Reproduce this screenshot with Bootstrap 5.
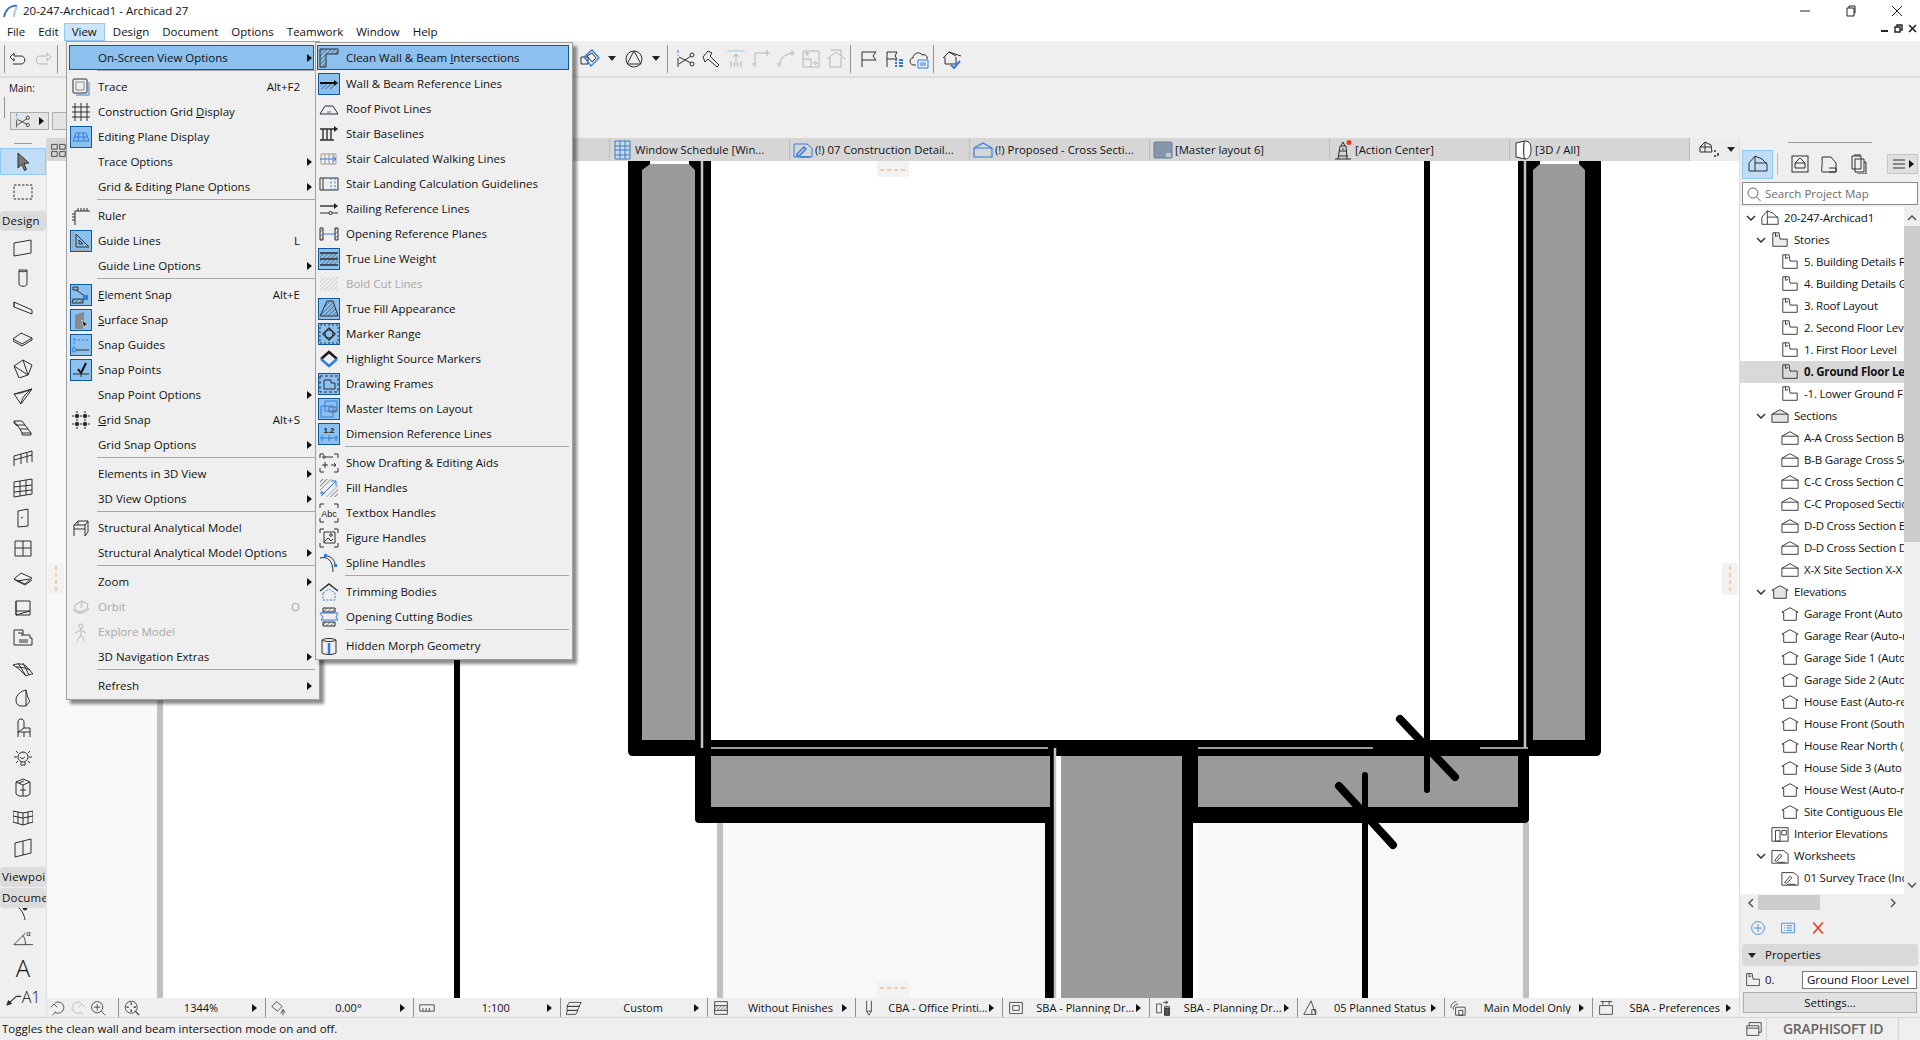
<!DOCTYPE html>
<html lang="en">
<head>
  <meta charset="UTF-8" />
  <title>20-247-Archicad1 - Archicad 27</title>
  <link href="https://cdn.jsdelivr.net/npm/bootstrap@5.3.0/dist/css/bootstrap.min.css" rel="stylesheet"/>
  <style>
    body { margin: 0; width: 1920px; height: 1040px; overflow: hidden; background: #fff; color: #111; font-family: "Open Sans", "Noto Sans", sans-serif; font-size: 11.5px; line-height: 1.2; }
    svg { display: block; flex: none; }
    .ic { width: 20px; height: 20px; fill: none; stroke: #2e2e2e; stroke-width: 1; }
    .ic-s { width: 16px; height: 16px; }
    .ic-g { stroke: #b4b4b4; color: #b4b4b4; }
    .shell { width: 1920px; height: 1040px; }

    .title-bar { height: 22px; padding-left: 3px; font-size: 11.5px; }
    .win-btn { width: 46px; }
    .menu-bar { height: 19px; padding-left: 3px; }
    .menu-top { padding: 0 3px; height: 18px; margin-right: 5px; border: 1px solid transparent; font-size: 11.5px; }
    .menu-top.is-open { background: #cce4f7; border-color: #90c8f6; padding: 0 7px; margin: 0 4px 0 -4px; }
    .doc-btns { margin-left: auto; gap: 5px; padding-right: 3px; margin-top: -6px; }

    .tool-row { height: 37px; background: #efefef; border-bottom: 2px solid #dcdcdc; }
    .tool-left { width: 577px; padding-left: 4px; }
    .tb-slot { width: 25px; height: 25px; }
    .tb-caret { width: 19px; }
    .tb-div { width: 1px; height: 28px; background: #8f8f8f; margin: 0 5px 0 2px; }
    .tool-row2 { height: 60px; background: #efefef; padding: 3px 0 0 4px; }
    .main-lbl { font-size: 10px; margin: 1px 0 3px 5px; }
    .pet-div { width: 1px; height: 21px; background: #8f8f8f; margin: 0 5px 12px 0; }
    .pet-box { width: 39px; height: 18px; background: #e4e4e4; border: 1px solid #adadad; }
    .pet-box2 { width: 14px; border-right: 0; margin-left: 3px; }
    .tri-r { width: 0; height: 0; border-left: 5px solid #111; border-top: 4px solid transparent; border-bottom: 4px solid transparent; }
    .tri-d { width: 0; height: 0; border-top: 5px solid #222; border-left: 4px solid transparent; border-right: 4px solid transparent; }

    .work-area { height: 879px; }
    .tool-box { width: 47px; background: #efefef; border-right: 1px solid #dedede; }
    .grip-h { height: 1px; background: #999; width: 18px; margin: 5px auto 4px; }
    .tool-on { height: 27px; background: #c0ddf5; border: 1px solid #90c8f6; }
    .tool-cell { height: 30px; }
    .tool-marq { margin-top: 2px; }
    .tool-arc { height: 10px; }
    .tool-lbl { height: 20px; background: #dcdcdc; border-radius: 4px; padding-left: 2px; overflow: hidden; white-space: nowrap; margin-bottom: 1px; font-size: 11.5px; letter-spacing: .2px; position: relative; z-index: 1; }
    .tool-lbl.lbl-sec { margin-top: 4px; }
    .tool-lbl.lbl-first { margin-bottom: 2px; }

    .center-col { width: 1692px; }
    .tab-row { height: 23px; background: #d6d6d6; }
    .tab-pad { width: 562px; padding-left: 3px; }
    .doc-tab { width: 180px; border-left: 1px solid #bdbdbd; padding-left: 3px; gap: 2px; white-space: nowrap; font-size: 11.3px; }
    .tab-opts { background: #ececec; border-left: 1px solid #bdbdbd; flex: 1; padding-left: 9px; gap: 8px; }
    .draw { width: 1692px; height: 837px; }

    .nav-row { height: 19px; background: #efefef; }
    .nav-left { width: 71px; padding-left: 3px; gap: 4px; }
    .nav-cell { width: 147.8px; height: 19px; border-left: 1px solid #8f8f8f; padding-left: 5px; padding-right: 8px; white-space: nowrap; }
    .nav-txt { flex: 1; text-align: center; overflow: hidden; font-size: 11px; padding-left: 10px; }

    .side-panel { width: 181px; background: #efefef; border-left: 1px solid #dcdcdc; }
    .pan-tabs { height: 34px; padding-left: 2px; }
    .pan-on { width: 31px; height: 29px; background: #c0ddf5; border: 1px solid #90c8f6; }
    .pan-sep { width: 1px; height: 22px; background: #bbb; margin: 0 5px 0 4px; }
    .pan-btn { width: 31px; height: 20px; background: #e0e0e0; border: 1px solid #c4c4c4; margin-left: auto; margin-right: 2px; gap: 2px; }
    .search-box { height: 23px; width: 176px; margin: 1px 0 2px 2px; background: #fff; border: 1px solid #8a8a8a; padding: 0 0 0 3px; gap: 3px; color: #6b6b6b; }
    .search-ic { stroke: #666; }
    .tree-wrap { height: 687px; }
    .tree-list { width: 164px; overflow: hidden; background: #fff; }
    .tree-row { height: 22px; white-space: nowrap; border: 0; background: transparent; padding: 0; color: #111; font-size: 11.5px; letter-spacing: -.2px; }
    .tree-row.is-sel { background: #d9d9d9; font-weight: 700; }
    .chev { width: 10px; margin-right: 5px; flex: none; }
    .lv0 { padding-left: 6px; }
    .lv1 { padding-left: 16px; }
    .lv1b { padding-left: 31px; }
    .lv2 { padding-left: 41px; }
    .tree-row .ic { width: 18px; height: 18px; margin-right: 5px; }
    .v-scroll { width: 16px; }
    .v-thumb { height: 316px; background: #cdcdcd; margin: 5px 0 340px; }
    .h-scroll { height: 17px; padding-left: 0; width: 164px; }
    .h-thumb { width: 62px; height: 15px; background: #cdcdcd; margin: 0 auto 0 6px; }
    .act-row { height: 33px; padding-left: 10px; gap: 14px; }
    .prop-head { height: 22px; margin: 0 2px; background: #d9d9d9; border-radius: 3px; padding-left: 6px; gap: 9px; }
    .prop-row { height: 19px; margin-top: 4px; padding-left: 5px; }
    .prop-input { width: 115px; height: 18px; min-height: 0; margin-left: auto; margin-right: 3px; border: 1px solid #7a7a7a; background: #fff; border-radius: 0; padding: 0 0 0 4px; font-size: 11.5px; color: #111; line-height: 16px; }
    .btn.set-btn { display: block; height: 21px; width: 174px; margin: 3px 0 0 3px; padding: 0; background: #e1e1e1; border: 1px solid #adadad; border-radius: 0; font-size: 11.5px; color: #111; line-height: 1; }

    .status-bar { height: 23px; background: #efefef; border-top: 1px solid #d4d4d4; padding-left: 2px; }
    .id-box { width: 174px; margin-left: auto; height: 22px; }
    .id-div { width: 1px; height: 22px; background: #d4d4d4; }
    .id-txt { font-size: 14px; color: #666; font-weight: 600; margin: 0 15px 0 16px; letter-spacing: -.3px; white-space: nowrap; }

    .dropdown-menu.fly { position: absolute; display: block; margin: 0; min-width: 0; border: 1px solid #a0a0a0; border-radius: 0; background: #efefef; box-shadow: 4px 4px 3px rgba(0,0,0,.45); font-size: 11.5px; color: #111; }
    .dropdown-menu.fly-a { left: 66px; top: 41px; width: 254px; height: 659px; padding: 3px 0 0 2px; z-index: 10; }
    .dropdown-menu.fly-b { left: 315px; top: 42px; width: 258px; height: 618px; padding: 2px 0 0 1px; z-index: 11; }
    .dropdown-item.m-it { height: 25px; padding: 0; width: 245px; color: #111; font-size: 11.5px; white-space: nowrap; background: none; border: 1px solid transparent; }
    .fly-b .dropdown-item.m-it { width: 252px; }
    .dropdown-item.m-it.is-hi { background: #8cc0ee; border-color: #0f5a9e; }
    .dropdown-item.m-it.is-dis { color: #a8a8a8; }
    .m-ico { width: 22px; height: 22px; margin: 0 6px 0 0; border: 1px solid transparent; flex: none; }
    .m-ico.is-on { background: #8cc0ee; border-color: #0f5a9e; }
    .m-key { margin-left: auto; margin-right: 13px; }
    .m-arr { margin-left: auto; margin-right: 1px; }
    .dropdown-divider.m-sep { border-top: 1px solid #a6a6a6; margin: 0 0 3px 28px; opacity: 1; width: 218px; }
    .fly-b .dropdown-divider.m-sep { margin-left: 28px; width: 224px; }
    .dropdown-item.first-gap { margin-bottom: 1px; }
    .dropdown-divider.m-sep.first-sep { margin-top: 0; margin-bottom: 3px; }
    .ic-txt { fill: #222; stroke: none; font-family: "Liberation Sans", sans-serif; }
  </style>
</head>
<body>

<svg width="0" height="0" class="position-absolute">
  <defs>
    <pattern id="hat" width="3" height="3" patternUnits="userSpaceOnUse" patternTransform="rotate(45)"><path d="M0 0v3" stroke="#2e2e2e" stroke-width="1"/></pattern>
    <pattern id="hatg" width="3" height="3" patternUnits="userSpaceOnUse" patternTransform="rotate(45)"><path d="M0 0v3" stroke="#b4b4b4" stroke-width="1"/></pattern>
  </defs>
  <!-- view menu -->
  <symbol id="trace" viewBox="0 0 20 20"><rect x="2" y="2" width="14" height="14" rx="1"/><rect x="5" y="5" width="8" height="8" stroke="#8a8a8a"/><path stroke="#2f7de1" d="M18 5v13H5"/></symbol>
  <symbol id="cgrid" viewBox="0 0 20 20"><path d="M1 5h18M1 10h18M1 15h18M4 1v18M10 1v18M16 1v18"/></symbol>
  <symbol id="tabgrid" viewBox="0 0 20 20"><path d="M2 3h7v6H2zM12 3h7v6h-7zM2 12h7v6H2zM12 12h7v6h-7z"/></symbol>
  <symbol id="eplane" viewBox="0 0 20 20"><path stroke="#2f7de1" d="M5 6h10l3 8H2zM8 6l-1 8M12 6l1 8M3.5 10h13"/></symbol>
  <symbol id="ruler" viewBox="0 0 20 20"><path d="M4 19V5h15M7 2v3M10 2v3M13 2v3M16 2v3M1 8h3M1 11h3M1 14h3"/></symbol>
  <symbol id="guide" viewBox="0 0 20 20"><path d="M5 3v13h13zM8 9v4h4z"/><path stroke="#e8750c" stroke-dasharray="2 1.5" d="M2 1v18h17"/></symbol>
  <symbol id="esnap" viewBox="0 0 20 20"><path d="M2 2h5v3H2zM5 5l9 6M2 14h10v4H1z"/><rect x="12" y="10" width="5" height="5" fill="#2f7de1" stroke="none"/><path fill="url(#hat)" stroke="none" d="M2 14h10v4H2z"/></symbol>
  <symbol id="ssnap" viewBox="0 0 20 20"><path fill="#8b8b8b" stroke="none" d="M4 19V5l9-3v17z"/><path fill="#111" stroke="#fff" stroke-width=".6" d="M11 10l6 5-3 .4-1 3z"/></symbol>
  <symbol id="sguides" viewBox="0 0 20 20"><path stroke="#2f7de1" stroke-dasharray="2 2" d="M3 3v11M3 5h14"/><circle cx="3" cy="15" r="2" stroke="#2f7de1"/><path d="M5 15h13"/></symbol>
  <symbol id="spoints" viewBox="0 0 20 20"><path stroke-width="2" stroke="#111" d="M7 9l3 4 5-10"/><path d="M2 14h16M10 11v6"/></symbol>
  <symbol id="gsnap" viewBox="0 0 20 20"><path stroke-dasharray="2 2" d="M6 1v18M14 1v18M1 6h18M1 14h18"/><circle cx="6" cy="6" r="1.8" fill="#222"/><circle cx="14" cy="6" r="1.8" fill="#222"/><circle cx="6" cy="14" r="1.8" fill="#222"/><circle cx="14" cy="14" r="1.8" fill="#222"/></symbol>
  <symbol id="sam" viewBox="0 0 20 20"><path d="M3 7h11l3-4H7zM3 7v11M14 7v11M17 3v11l-3 4M3 11h11M7 3v4"/></symbol>
  <symbol id="orbit" viewBox="0 0 20 20"><path stroke="#b8b8b8" d="M4 8l7-4 6 3-1 5-7 3-5-2zM11 4l-1 7M2 12c2 5 12 6 16-1"/></symbol>
  <symbol id="explore" viewBox="0 0 20 20"><circle cx="10" cy="4" r="2" stroke="#b8b8b8"/><path stroke="#b8b8b8" d="M10 6v7M4 11l6-3 5 3M10 13l-4 6M10 13l4 6"/></symbol>
  <!-- on-screen view options -->
  <symbol id="cleanw" viewBox="0 0 20 20"><path fill="url(#hat)" d="M1 1h18v5H7v13H1z"/></symbol>
  <symbol id="wbref" viewBox="0 0 20 20"><path fill="url(#hat)" stroke="none" d="M2 10h14l-2 5H1z"/><path stroke="#111" stroke-width="2" d="M1 9h15"/><path fill="#111" stroke="none" d="M15 6l4 3-4 3z"/></symbol>
  <symbol id="roofp" viewBox="0 0 20 20"><path d="M1 15l5-8h8l5 8z"/><path stroke="#2f7de1" d="M8 13h4"/></symbol>
  <symbol id="stairb" viewBox="0 0 20 20"><path stroke-width="1.4" d="M1 5h14M4 5v11M8 5v11M12 5v11M1 16h14"/><path fill="#222" stroke="none" d="M15 2l4 3-4 3z"/></symbol>
  <symbol id="stairw" viewBox="0 0 20 20"><path stroke="#9a9a9a" d="M2 5h15v10H2zM6 5v10M10 5v10M14 5v10"/><path stroke="#2f7de1" d="M1 10h16M14 7l3 3-3 3"/></symbol>
  <symbol id="stairl" viewBox="0 0 20 20"><path d="M1 4h18v12H1zM4 4v12"/><path stroke="#2f7de1" stroke-dasharray="2 1.5" d="M12 4v12M16 4v12"/></symbol>
  <symbol id="railr" viewBox="0 0 20 20"><path stroke-width="1.4" d="M1 7h14"/><path fill="#222" stroke="none" d="M15 4l4 3-4 3z"/><path d="M1 14h9M13 14h6"/><circle cx="11.5" cy="14" r="1.6"/></symbol>
  <symbol id="openr" viewBox="0 0 20 20"><path fill="url(#hat)" d="M1 4h3v12H1zM16 4h3v12h-3z"/><path stroke="#2f7de1" d="M4 10h12"/></symbol>
  <symbol id="trueln" viewBox="0 0 20 20"><path stroke-width="1.5" d="M1 4h18M1 10h18M1 16h18"/><path fill="url(#hat)" stroke="none" d="M1 4h18v12H1z"/></symbol>
  <symbol id="boldc" viewBox="0 0 20 20"><path stroke="none" fill="url(#hatg)" d="M1 3h18v14H1z"/></symbol>
  <symbol id="truefl" viewBox="0 0 20 20"><path fill="url(#hat)" d="M8 2h6l5 15H1z"/></symbol>
  <symbol id="marker" viewBox="0 0 20 20"><rect x="1" y="1" width="18" height="18" stroke-dasharray="2 2"/><path stroke-width="1.4" d="M4 10l6-6 6 6-6 6z"/><circle cx="10" cy="10" r="4"/></symbol>
  <symbol id="sourcem" viewBox="0 0 20 20"><path stroke="#1d1d1d" stroke-width="2.5" d="M2 10l8-7 8 7"/><path stroke="#2f7de1" stroke-width="2.5" d="M2 10l8 7 8-7"/></symbol>
  <symbol id="frames" viewBox="0 0 20 20"><rect x="1" y="2" width="18" height="16" stroke-dasharray="3 2"/><path d="M5 6h7v3h4v6H5z"/></symbol>
  <symbol id="master" viewBox="0 0 20 20"><path stroke="#2f7de1" d="M6 2h12v10H6zM2 7h12v11H2z"/><path stroke="#666" d="M10 8h7v5h-7z"/></symbol>
  <symbol id="dimr" viewBox="0 0 20 20"><path stroke="#2f7de1" d="M1 14h18M3 11v6M10 11v6M17 11v6"/></symbol>
  <symbol id="aids" viewBox="0 0 20 20"><path d="M1 5V1h4M15 1h4v4M1 15v4h4M15 19h4v-4M6 4h8M3 12h6M6 9v6M12 12h5M15 10l2 2-2 2"/><circle cx="5" cy="4" r="1.2"/></symbol>
  <symbol id="fillh" viewBox="0 0 20 20"><path stroke="none" fill="url(#hat)" d="M1 1h12L1 13zM19 7v12H7z"/><path stroke="#2f7de1" d="M3 17L17 3M12 3h5v5M1 15h5M3 13v5"/></symbol>
  <symbol id="textb" viewBox="0 0 20 20"><path d="M1 5V1h4M15 1h4v4M1 15v4h4M15 19h4v-4"/></symbol>
  <symbol id="figure" viewBox="0 0 20 20"><path d="M1 5V1h4M15 1h4v4M1 15v4h4M15 19h4v-4M5 4h11v11H5zM5 14l4-4 3 3 2-2"/><circle cx="12" cy="7" r="1.3"/></symbol>
  <symbol id="spline" viewBox="0 0 20 20"><path d="M1 5c8-2 13 3 13 14M7 3c5 0 9 4 9 9"/><rect x="5" y="1" width="3" height="3" fill="#2f7de1" stroke="none"/><rect x="15" y="11" width="3" height="3" fill="#2f7de1" stroke="none"/></symbol>
  <symbol id="trim" viewBox="0 0 20 20"><path stroke-width="1.4" d="M1 9l9-7 9 7"/><path stroke="#2f7de1" stroke-dasharray="2 1.5" d="M4 11l6-4 6 4v7H4z"/></symbol>
  <symbol id="openc" viewBox="0 0 20 20"><path fill="url(#hat)" d="M4 1h12v4H4zM4 15h12v4H4z"/><path stroke="#2f7de1" d="M1 6h18l-2 4 2 3H2l2-3z"/></symbol>
  <symbol id="morph" viewBox="0 0 20 20"><path d="M3 4c3-2 11-2 14 0v13c-3 2-11 2-14 0zM3 4c3 2 11 2 14 0"/><path stroke="#2f7de1" stroke-width="2.5" d="M10 7v11"/></symbol>
  <!-- toolbox -->
  <symbol id="t-arrow" viewBox="0 0 20 20"><path fill="#777" stroke="#333" d="M5 1l11 10-5 .5 2.5 6-2 1-2.5-6L5 16z"/></symbol>
  <symbol id="t-marq" viewBox="0 0 20 20"><rect x="1" y="3" width="18" height="14" stroke-dasharray="2.5 1.5"/></symbol>
  <symbol id="t-wall" viewBox="0 0 20 20"><path d="M1 5l17-3v13L1 18z"/></symbol>
  <symbol id="t-col" viewBox="0 0 20 20"><path d="M6 2h8v14c0 3-8 3-8 0zM6 3c2 1 6 1 8 0"/></symbol>
  <symbol id="t-beam" viewBox="0 0 20 20"><path d="M1 4l18 8v4L1 9zM1 4v5"/></symbol>
  <symbol id="t-slab" viewBox="0 0 20 20"><path d="M0 11l8-6 11 5-10 6zM0 11v2l9 5 10-6v-2"/></symbol>
  <symbol id="t-roof" viewBox="0 0 20 20"><path d="M1 8l9-6 9 5-4 10zM10 2l5 15L6 20 1 8"/></symbol>
  <symbol id="t-shell" viewBox="0 0 20 20"><path d="M1 6l7 10L19 1zM1 6c6 0 12-3 18-5M8 16c0-4 4-11 11-15"/></symbol>
  <symbol id="t-stair" viewBox="0 0 20 20"><path d="M1 3h8l3 4h-8zM4 7l3 4h8l-3-4M7 11l2 4h9l-3-4M1 3v2l3 3M9 15v2h9v-2"/></symbol>
  <symbol id="t-rail" viewBox="0 0 20 20"><path d="M1 8l18-5M1 12l18-5M1 8v10M8 6v10M14 5v10M19 3v11"/></symbol>
  <symbol id="t-cw" viewBox="0 0 20 20"><path d="M1 4l18-3v15L1 19zM1 9l18-2M1 14l18-2M7 3v15M13 2v15"/></symbol>
  <symbol id="t-door" viewBox="0 0 20 20"><path d="M5 3l10-2v17L5 19zM8 10l2-1"/></symbol>
  <symbol id="t-win" viewBox="0 0 20 20"><path d="M2 3h16v15H2zM10 3v15M2 10h16"/></symbol>
  <symbol id="t-sky" viewBox="0 0 20 20"><path d="M1 11l7-6 11 5-7 6zM1 11l3 2 13-2M4 13l8 4 7-5"/></symbol>
  <symbol id="t-corn" viewBox="0 0 20 20"><path d="M3 3h14v14H3zM3 13h14M3 3v14M3 17l14-4"/></symbol>
  <symbol id="t-zone" viewBox="0 0 20 20"><path d="M2 2h8v5h7v3h2v7H1V2zM5 5h4v3M6 12h9M6 14h9"/></symbol>
  <symbol id="t-mesh" viewBox="0 0 20 20"><path d="M0 7c6-2 10-1 13 1l7 8c-2 0-5 1-7 2L7 12C5 10 3 9 0 7zM5 5l8 13M10 5l6 12M3 9c5 0 10 1 14 3"/></symbol>
  <symbol id="t-morph" viewBox="0 0 20 20"><path d="M3 12c0-5 5-9 10-10v16H7c-3-1-4-3-4-6zM13 2c1 5 3 11 4 11l-4 5"/></symbol>
  <symbol id="t-chair" viewBox="0 0 20 20"><path d="M5 14V4c0-4 6-4 6 0v6h6v9M5 19v-5h12M5 14l6-4M11 14v5"/></symbol>
  <symbol id="t-lamp" viewBox="0 0 20 20"><circle cx="10" cy="9" r="5"/><path d="M8 14v3h4v-3M1 9h3M16 9h3M3 3l2 2M17 3l-2 2M3 15l2-2M17 15l-2-2M7 9l2 2 3-2"/></symbol>
  <symbol id="t-equip" viewBox="0 0 20 20"><path d="M10 1l7 3v12l-3 2H6l-3-2V4zM3 4l7 3 7-3M10 7v11M6 5l5-2M7 12h6"/></symbol>
  <symbol id="t-cwall" viewBox="0 0 20 20"><path d="M0 3l10 2 10-2v11l-10 3-10-3zM10 5v12M0 8l10 2 10-2M5 4v11M15 4v11"/></symbol>
  <symbol id="t-wins" viewBox="0 0 20 20"><path d="M2 5l16-4v14L2 19zM10 3v14"/></symbol>
  <symbol id="t-arc" viewBox="0 0 20 20"><path d="M3 2c4 2 8 7 9 14"/><circle cx="12" cy="4" r="2" fill="#222"/></symbol>
  <symbol id="t-ang" viewBox="0 0 24 20"><path d="M1 18h23M1 18L15 4M12 7c2 3 3 6 3 11"/></symbol>
  <symbol id="t-lead" viewBox="0 0 20 20"><path stroke-width="1.500" d="M3 17L13 8M13 8h6"/><path fill="#222" d="M1 19l2-6 4 4z"/></symbol>
  <!-- top toolbar -->
  <symbol id="undo" viewBox="0 0 20 20"><path d="M2 8l4-4v3h7c5 0 5 8 0 8H5M2 8l4 4V9"/></symbol>
  <symbol id="redo" viewBox="0 0 20 20"><path d="M18 8l-4-4v3H7c-5 0-5 8 0 8h8M18 8l-4 4V9"/></symbol>
  <symbol id="b-layer" viewBox="0 0 20 20"><path d="M1 8h7v7H1z"/><path stroke="#2f7de1" stroke-width="1.3" d="M4 8l8-7 7 8-8 8z"/><path d="M7 7l5-3 4 5-4 4z"/></symbol>
  <symbol id="b-tri" viewBox="0 0 20 20"><circle cx="10" cy="10" r="8"/><path d="M10 2L3 15h14z"/></symbol>
  <symbol id="b-cut" viewBox="0 0 20 20"><path stroke="#2f7de1" stroke-dasharray="3 2" d="M2 1v6"/><path d="M2 9v9M3 8l12 6M3 15l12-8"/><circle cx="16" cy="6" r="2"/><circle cx="16" cy="15" r="2"/></symbol>
  <symbol id="b-axe" viewBox="0 0 20 20"><path d="M2 8l5-6 4 2-2 3 9 9-2 2-9-8-3 3z"/></symbol>
  <symbol id="b-up" viewBox="0 0 20 20"><path stroke="#a9c8ee" d="M1 2h18"/><path d="M10 16V5M7 8l3-3 3 3M5 12v6M8 14v4M12 14v4M15 12v6" stroke="#b4b4b4"/></symbol>
  <symbol id="b-cor" viewBox="0 0 20 20"><path stroke="#b4b4b4" d="M1 15h3M4 18V4h15M16 1v6"/></symbol>
  <symbol id="b-fil" viewBox="0 0 20 20"><path stroke="#b4b4b4" d="M1 15h3M4 18V15C4 9 10 4 19 4M16 1v6"/></symbol>
  <symbol id="b-rep" viewBox="0 0 20 20"><path stroke="#b4b4b4" d="M2 2h16v16H2zM2 10h8v8M6 7V4M4 5l2-2 2 2M12 14h4M14 12l2 2-2 2"/></symbol>
  <symbol id="b-hom" viewBox="0 0 20 20"><path stroke="#b4b4b4" d="M4 1h11v6M1 10l9-7 9 7M4 8v10h11V8"/></symbol>
  <symbol id="b-flag" viewBox="0 0 20 20"><path d="M3 18V3h14l-3 4 3 4H3"/></symbol>
  <symbol id="b-flist" viewBox="0 0 20 20"><path d="M3 18V3h10l-2 4 2 3H3"/><path stroke="#2f7de1" stroke-width="2" d="M11 11h2M15 11h4M11 14h2M15 14h4M11 17h2M15 17h4"/></symbol>
  <symbol id="b-cloud" viewBox="0 0 20 20"><path d="M7 16H4C0 15 0 9 4 9c0-5 7-7 9-3 3-1 6 1 5 4"/><path stroke="#2f7de1" d="M9 11h10v8H9zM11 14h6M11 16h6"/></symbol>
  <symbol id="b-check" viewBox="0 0 20 20"><path d="M1 9l6-6 12 4M3 8v7h11V8M14 7l-7-4"/><path stroke="#2f7de1" stroke-width="2" d="M9 16l3 3 6-7"/></symbol>
  <!-- tabs, panel and tree -->
  <symbol id="k-sched" viewBox="0 0 20 20"><path stroke="#2f7de1" d="M2 1h15v18H2zM7 1v18M12 1v18M2 6h15M2 10h15M2 15h15"/></symbol>
  <symbol id="k-sheet" viewBox="0 0 20 20"><path stroke="#2f7de1" d="M1 4h13l5 4v9H1z"/><path stroke="#2f7de1" stroke-width="1.5" d="M4 14L11 7l2 2-7 7H4zM7 17h10"/></symbol>
  <symbol id="k-sect" viewBox="0 0 20 20"><path stroke="#2f7de1" stroke-width="1.2" d="M1 8l9-5 9 5v9H1zM1 8h18"/></symbol>
  <symbol id="k-lay" viewBox="0 0 20 20"><rect x="1" y="2" width="18" height="16" rx="1" fill="#8797ab" stroke="#6d7d91"/><path stroke="#fff" d="M13 14h5M13 16h5"/></symbol>
  <symbol id="k-act" viewBox="0 0 20 20"><path d="M7 6l-2 13M13 6l1 13M7 6h6M6 11h8M5 16h10M2 19h16M8 6l2-4 2 4M9 9h2"/><circle cx="16" cy="2.500" r="2.500" fill="#ef3e16" stroke="none"/></symbol>
  <symbol id="k-3d" viewBox="0 0 20 20"><path d="M3 3l9-2c5 0 6 4 6 9s-2 9-6 9l-9-2zM12 1c-2 0-2 17 0 18" fill="#fff"/></symbol>
  <symbol id="k-proj" viewBox="0 0 20 20"><path d="M1 17V9l6-7 7 3 5 5v7zM7 2v15M7 9h12" /></symbol>
  <symbol id="k-opt" viewBox="0 0 20 20"><path d="M1 12V7l5-5 6 3 1 7zM6 2v10M1 7h11"/><path stroke-width="1.500" d="M16 10v2M16 15v2M19 13v3"/></symbol>
  <symbol id="k-lay2" viewBox="0 0 20 20"><rect x="2" y="2" width="16" height="16"/><path d="M5 14V9l5-5 5 5v5zM5 9h10"/></symbol>
  <symbol id="k-fold" viewBox="0 0 20 20"><path d="M4 18c-3 0 0-5-1-15h9l5 6v9zM10 14h7v4h-7"/></symbol>
  <symbol id="k-pub" viewBox="0 0 20 20"><path d="M4 2h9v13H4zM7 5h9v13H7z"/><path d="M6 1h7M16 8h2v12H9"/></symbol>
  <symbol id="k-story" viewBox="0 0 20 20"><path d="M2 2h7l1 7h8v8H2z"/><path d="M5 2v4l3-1"/></symbol>
  <symbol id="k-storyf" viewBox="0 0 20 20"><path fill="#ededed" d="M2 2h7l1 7h8v8H2z"/><path d="M5 2v4l3-1"/></symbol>
  <symbol id="k-sec" viewBox="0 0 20 20"><path d="M1 8l9-5 9 5v9H1zM1 8h18"/></symbol>
  <symbol id="k-secf" viewBox="0 0 20 20"><path fill="#e4e4e4" d="M1 8l9-5 9 5v9H1zM1 8h18"/></symbol>
  <symbol id="k-elev" viewBox="0 0 20 20"><path d="M1 8l9-5 9 5h-2v9H3V8z"/></symbol>
  <symbol id="k-elevf" viewBox="0 0 20 20"><path fill="#e4e4e4" d="M1 8l9-5 9 5h-2v9H3V8z"/></symbol>
  <symbol id="k-ie" viewBox="0 0 20 20"><path d="M1 3h18v15H1zM5 6h5v12H5zM12 6h5v5h-5z"/></symbol>
  <symbol id="k-work" viewBox="0 0 20 20"><path d="M1 4h13l5 4v10H1zM4 15l6-7 2 2-6 6zM7 17h9"/></symbol>
  <symbol id="k-list" viewBox="0 0 20 20"><path stroke="#2f7de1" d="M2 4h16v12H2zM5 7h1M8 7h7M5 10h1M8 10h7M5 13h1M8 13h7"/></symbol>
  <symbol id="k-plus" viewBox="0 0 20 20"><circle cx="10" cy="10" r="8" stroke="#2f7de1"/><path stroke="#2f7de1" d="M10 5v10M5 10h10"/></symbol>
  <symbol id="k-x" viewBox="0 0 20 20"><path stroke="#ee3e1a" stroke-width="2" d="M4 3l12 14M16 3L4 17"/></symbol>
  <symbol id="k-win" viewBox="0 0 20 20"><path d="M1 6h15v12H1zM1 9h15M4 6V2h15v12h-3"/></symbol>
  <symbol id="n-zprev" viewBox="0 0 20 20"><path d="M6 4a7 7 0 1 1 0 11M1 9l4-4 4 4M7 15l-4 4"/></symbol>
  <symbol id="n-znext" viewBox="0 0 20 20"><path stroke="#b4b4b4" d="M14 4a7 7 0 1 0 0 11M19 9l-4-4-4 4M13 15l4 4"/></symbol>
  <symbol id="n-zin" viewBox="0 0 20 20"><circle cx="9" cy="9" r="7"/><path d="M9 5v8M5 9h8M14 14l5 5"/></symbol>
  <symbol id="n-fit" viewBox="0 0 20 20"><circle cx="9" cy="9" r="7.500"/><path stroke-width="1.500" d="M9 3v3M9 12v3M3 9h3M12 9h3M14 14l5 5"/></symbol>
  <symbol id="n-rot" viewBox="0 0 20 20"><path d="M1 8l6-6 7 6-6 6zM12 17l3-5 3 4M15 12v7"/></symbol>
  <symbol id="n-scale" viewBox="0 0 20 20"><path d="M1 6h18v8H1zM5 10v4M9 10v4M13 10v4"/></symbol>
  <symbol id="n-lay" viewBox="0 0 20 20"><path d="M4 3h15l-3 5H1zM2 8h15l-3 5H1zM2 13h13l-3 5H0z"/></symbol>
  <symbol id="n-fin" viewBox="0 0 20 20"><path d="M2 2h16v16H2zM2 7h16M2 13h16"/><path fill="url(#hat)" stroke="none" d="M2 7h16v6H2z"/></symbol>
  <symbol id="n-pen" viewBox="0 0 20 20"><path d="M7 1v13l3 5 3-5V1M7 14h6"/></symbol>
  <symbol id="n-plan" viewBox="0 0 20 20"><path d="M2 3h16v14H2zM6 7h8v6H6z"/></symbol>
  <symbol id="n-copy" viewBox="0 0 20 20"><path d="M2 5h6v11H2zM12 8h6v11h-6z"/><path fill="#555" d="M12 10h6v9h-6z"/><path d="M13 1l3 2-3 2M10 3h6"/></symbol>
  <symbol id="n-stat" viewBox="0 0 20 20"><path d="M1 18L10 1l6 17zM11 18v-6h5v6"/></symbol>
  <symbol id="n-model" viewBox="0 0 20 20"><path d="M1 10c0-4 3-8 7-8M4 12c0-4 2-7 6-7M7 9h12v10H7zM11 13h5v6h-5z"/></symbol>
  <symbol id="n-pref" viewBox="0 0 20 20"><path d="M2 7h16v11H2zM3 2h15M6 1v5M14 1v5"/></symbol>
</svg>

<div class="shell d-flex flex-column position-relative">

  <div class="title-bar d-flex align-items-center">
    <svg width="16" height="14" viewBox="0 0 16 14" fill="none" class="me-1"><path stroke="#3b74c7" stroke-width="2" d="M1 13C3 5 8 1 14 2"/><path stroke="#b8c6dc" stroke-width="2" d="M11 13c0-4 1-7 3-10"/></svg>
    <span>20-247-Archicad1 - Archicad 27</span>
    <div class="ms-auto d-flex align-items-center">
      <div class="win-btn d-flex justify-content-center"><svg width="12" height="12" fill="none" stroke="#222"><path d="M1 6h10"/></svg></div>
      <div class="win-btn d-flex justify-content-center"><svg width="12" height="12" fill="none" stroke="#222"><path d="M2 3h7v8H2zM4 3V1h6v7H9"/></svg></div>
      <div class="win-btn d-flex justify-content-center"><svg width="12" height="12" fill="none" stroke="#222"><path d="M1 1l10 10M11 1L1 11"/></svg></div>
    </div>
  </div>

  <nav class="menu-bar d-flex align-items-center">
    <span class="menu-top d-flex align-items-center">File</span>
    <span class="menu-top d-flex align-items-center">Edit</span>
    <span class="menu-top is-open d-flex align-items-center">View</span>
    <span class="menu-top d-flex align-items-center">Design</span>
    <span class="menu-top d-flex align-items-center">Document</span>
    <span class="menu-top d-flex align-items-center">Options</span>
    <span class="menu-top d-flex align-items-center">Teamwork</span>
    <span class="menu-top d-flex align-items-center">Window</span>
    <span class="menu-top d-flex align-items-center">Help</span>
    <div class="doc-btns d-flex align-items-center">
      <svg width="9" height="9" fill="none" stroke="#222" stroke-width="2"><path d="M1 7h7"/></svg>
      <svg width="9" height="9" fill="none" stroke="#222" stroke-width="1.400"><path d="M1 3h5v5H1zM3 3V1h5v5H6"/></svg>
      <svg width="9" height="9" fill="none" stroke="#222" stroke-width="1.600"><path d="M1 1l7 7M8 1L1 8"/></svg>
    </div>
  </nav>

  <div class="tool-row d-flex align-items-center">
    <div class="tool-left d-flex align-items-center">
      <div class="tb-div ms-0 me-0"></div>
      <div class="tb-slot d-flex align-items-center justify-content-center"><svg class="ic"><use href="#undo"/></svg></div>
      <div class="tb-slot d-flex align-items-center justify-content-center"><svg class="ic ic-g"><use href="#redo"/></svg></div>
      <div class="tb-div"></div>
    </div>
    <div class="tb-slot d-flex align-items-center justify-content-center"><svg class="ic"><use href="#b-layer"/></svg></div>
    <div class="tb-caret d-flex justify-content-center"><span class="tri-d"></span></div>
    <div class="tb-slot d-flex align-items-center justify-content-center"><svg class="ic"><use href="#b-tri"/></svg></div>
    <div class="tb-caret d-flex justify-content-center"><span class="tri-d"></span></div>
    <div class="tb-div"></div>
    <div class="tb-slot d-flex align-items-center justify-content-center"><svg class="ic"><use href="#b-cut"/></svg></div>
    <div class="tb-slot d-flex align-items-center justify-content-center"><svg class="ic"><use href="#b-axe"/></svg></div>
    <div class="tb-slot d-flex align-items-center justify-content-center"><svg class="ic"><use href="#b-up"/></svg></div>
    <div class="tb-slot d-flex align-items-center justify-content-center"><svg class="ic"><use href="#b-cor"/></svg></div>
    <div class="tb-slot d-flex align-items-center justify-content-center"><svg class="ic"><use href="#b-fil"/></svg></div>
    <div class="tb-slot d-flex align-items-center justify-content-center"><svg class="ic"><use href="#b-rep"/></svg></div>
    <div class="tb-slot d-flex align-items-center justify-content-center"><svg class="ic"><use href="#b-hom"/></svg></div>
    <div class="tb-div"></div>
    <div class="tb-slot d-flex align-items-center justify-content-center"><svg class="ic"><use href="#b-flag"/></svg></div>
    <div class="tb-slot d-flex align-items-center justify-content-center"><svg class="ic"><use href="#b-flist"/></svg></div>
    <div class="tb-slot d-flex align-items-center justify-content-center"><svg class="ic"><use href="#b-cloud"/></svg></div>
    <div class="tb-div"></div>
    <div class="tb-slot d-flex align-items-center justify-content-center"><svg class="ic"><use href="#b-check"/></svg></div>
  </div>

  <div class="tool-row2">
    <div class="main-lbl">Main:</div>
    <div class="d-flex align-items-end">
      <div class="pet-div"></div>
      <div class="pet-box d-flex align-items-center justify-content-between px-1"><svg class="ic ic-s"><use href="#b-cut"/></svg><span class="tri-r"></span></div>
      <div class="pet-box pet-box2"></div>
    </div>
  </div>

  <div class="work-area d-flex">
    <div class="tool-box d-flex flex-column">
      <div class="grip-h"></div>
      <div class="tool-on d-flex align-items-center justify-content-center"><svg class="ic"><use href="#t-arrow"/></svg></div>
      <div class="tool-cell tool-marq d-flex align-items-center justify-content-center"><svg class="ic"><use href="#t-marq"/></svg></div>
      <div class="tool-lbl lbl-sec lbl-first d-flex align-items-center">Design</div>
      <div class="tool-cell d-flex align-items-center justify-content-center"><svg class="ic"><use href="#t-wall"/></svg></div>
      <div class="tool-cell d-flex align-items-center justify-content-center"><svg class="ic"><use href="#t-col"/></svg></div>
      <div class="tool-cell d-flex align-items-center justify-content-center"><svg class="ic"><use href="#t-beam"/></svg></div>
      <div class="tool-cell d-flex align-items-center justify-content-center"><svg class="ic"><use href="#t-slab"/></svg></div>
      <div class="tool-cell d-flex align-items-center justify-content-center"><svg class="ic"><use href="#t-roof"/></svg></div>
      <div class="tool-cell d-flex align-items-center justify-content-center"><svg class="ic"><use href="#t-shell"/></svg></div>
      <div class="tool-cell d-flex align-items-center justify-content-center"><svg class="ic"><use href="#t-stair"/></svg></div>
      <div class="tool-cell d-flex align-items-center justify-content-center"><svg class="ic"><use href="#t-rail"/></svg></div>
      <div class="tool-cell d-flex align-items-center justify-content-center"><svg class="ic"><use href="#t-cw"/></svg></div>
      <div class="tool-cell d-flex align-items-center justify-content-center"><svg class="ic"><use href="#t-door"/></svg></div>
      <div class="tool-cell d-flex align-items-center justify-content-center"><svg class="ic"><use href="#t-win"/></svg></div>
      <div class="tool-cell d-flex align-items-center justify-content-center"><svg class="ic"><use href="#t-sky"/></svg></div>
      <div class="tool-cell d-flex align-items-center justify-content-center"><svg class="ic"><use href="#t-corn"/></svg></div>
      <div class="tool-cell d-flex align-items-center justify-content-center"><svg class="ic"><use href="#t-zone"/></svg></div>
      <div class="tool-cell d-flex align-items-center justify-content-center"><svg class="ic"><use href="#t-mesh"/></svg></div>
      <div class="tool-cell d-flex align-items-center justify-content-center"><svg class="ic"><use href="#t-morph"/></svg></div>
      <div class="tool-cell d-flex align-items-center justify-content-center"><svg class="ic"><use href="#t-chair"/></svg></div>
      <div class="tool-cell d-flex align-items-center justify-content-center"><svg class="ic"><use href="#t-lamp"/></svg></div>
      <div class="tool-cell d-flex align-items-center justify-content-center"><svg class="ic"><use href="#t-equip"/></svg></div>
      <div class="tool-cell d-flex align-items-center justify-content-center"><svg class="ic"><use href="#t-cwall"/></svg></div>
      <div class="tool-cell d-flex align-items-center justify-content-center"><svg class="ic"><use href="#t-wins"/></svg></div>
      <div class="tool-lbl lbl-sec d-flex align-items-center">Viewpoi</div>
      <div class="tool-lbl d-flex align-items-center">Docume</div>
      <div class="tool-arc d-flex align-items-center justify-content-center"><svg class="ic"><use href="#t-arc"/></svg></div>
      <div class="tool-cell d-flex align-items-center justify-content-center mt-1"><svg class="ic" width="24" height="20" viewBox="0 0 24 20"><use href="#t-ang"/><text x="16" y="8" font-size="9" class="ic-txt">α</text></svg></div>
      <div class="tool-cell d-flex align-items-center justify-content-center fs-4 fw-light">A</div>
      <div class="tool-cell d-flex align-items-center justify-content-center"><svg class="ic ic-s"><use href="#t-lead"/></svg><span class="fw-light fs-6">A1</span></div>
    </div>

    <div class="center-col d-flex flex-column">
      <div class="tab-row d-flex">
        <div class="tab-pad d-flex align-items-center"><svg class="ic ic-s"><use href="#tabgrid"/></svg></div>
        <div class="doc-tab d-flex align-items-center"><svg class="ic"><use href="#k-sched"/></svg><span>Window Schedule [Win...</span></div>
        <div class="doc-tab d-flex align-items-center"><svg class="ic"><use href="#k-sheet"/></svg><span>(!) 07 Construction Detail...</span></div>
        <div class="doc-tab d-flex align-items-center"><svg class="ic"><use href="#k-sect"/></svg><span>(!) Proposed - Cross Secti...</span></div>
        <div class="doc-tab d-flex align-items-center"><svg class="ic"><use href="#k-lay"/></svg><span>[Master layout 6]</span></div>
        <div class="doc-tab d-flex align-items-center"><svg class="ic"><use href="#k-act"/></svg><span>[Action Center]</span></div>
        <div class="doc-tab d-flex align-items-center"><svg class="ic"><use href="#k-3d"/></svg><span>[3D / All]</span></div>
        <div class="tab-opts d-flex align-items-center"><svg class="ic"><use href="#k-opt"/></svg><span class="tri-d"></span></div>
      </div>

      <svg class="draw" viewBox="47 161 1692 837" fill="none">
        <rect x="47" y="161" width="1692" height="837" fill="#fff"/>
        <rect x="47" y="161" width="110" height="837" fill="#f8f8f8"/>
        <rect x="157" y="161" width="6" height="837" fill="#c0c0c0"/>
        <rect x="454" y="161" width="6" height="837" fill="#000"/>
        <rect x="717" y="823" width="333" height="175" fill="#f8f8f8"/>
        <rect x="1198" y="823" width="331" height="175" fill="#f8f8f8"/>
        <rect x="717" y="823" width="6" height="175" fill="#c0c0c0"/>
        <rect x="1523" y="823" width="6" height="175" fill="#c0c0c0"/>
        <path fill="#000" d="M628 161h83v579h807V161h83v590q0 5-5 5h-67v63q0 4-4 4h-332v175h-16V756h-121v242h-11V823H699q-4 0-4-4v-63h-62q-5 0-5-5z"/>
        <path fill="#9a9a9a" d="M642 170l8-6v-3h39v3l6 6v570h-53zM1533 170l7-6v-3h39v3l6 6v570h-52zM711 756h339v51H711zM1198 756h320v51h-320zM1061 756h121v242h-121z"/>
        <path fill="#fff" d="M650 161h39v3h-39zM1540 161h39v3h-39z"/>
        <path stroke="#9a9a9a" stroke-width="2" d="M711 748h337M1198 748h175M1480 748h48"/>
        <path stroke="#c4c4c4" stroke-width="2.500" d="M702 161v587M1525 161v587M1055 748v250"/>
        <path stroke="#000" stroke-width="6" stroke-linecap="round" d="M1427 161v629M1365 775v223"/>
        <path stroke="#000" stroke-width="8" stroke-linecap="round" d="M1400 719l55 58M1339 786l54 59"/>
        <rect x="877" y="161" width="32" height="16" rx="2" fill="#f2f2f2"/><path stroke="#f7a35c" stroke-dasharray="4 3" d="M880 170h27"/>
        <rect x="877" y="981" width="32" height="17" rx="2" fill="#f2f2f2"/><path stroke="#f7a35c" stroke-dasharray="4 3" d="M880 988h27"/>
        <rect x="48" y="563" width="16" height="32" rx="2" fill="#f2f2f2"/><path stroke="#f7a35c" stroke-dasharray="4 3" d="M56 566v27"/>
        <rect x="1722" y="563" width="16" height="32" rx="2" fill="#f2f2f2"/><path stroke="#f7a35c" stroke-dasharray="4 3" d="M1730 566v27"/>
      </svg>

      <div class="nav-row d-flex">
        <div class="nav-left d-flex align-items-center"><svg class="ic ic-s"><use href="#n-zprev"/></svg><svg class="ic ic-s"><use href="#n-znext"/></svg><svg class="ic ic-s"><use href="#n-zin"/></svg></div>
        <div class="nav-cell d-flex align-items-center"><svg class="ic ic-s"><use href="#n-fit"/></svg><span class="nav-txt">1344%</span><span class="tri-r"></span></div>
        <div class="nav-cell d-flex align-items-center"><svg class="ic ic-s"><use href="#n-rot"/></svg><span class="nav-txt">0.00°</span><span class="tri-r"></span></div>
        <div class="nav-cell d-flex align-items-center"><svg class="ic ic-s"><use href="#n-scale"/></svg><span class="nav-txt">1:100</span><span class="tri-r"></span></div>
        <div class="nav-cell d-flex align-items-center"><svg class="ic ic-s"><use href="#n-lay"/></svg><span class="nav-txt">Custom</span><span class="tri-r"></span></div>
        <div class="nav-cell d-flex align-items-center"><svg class="ic ic-s"><use href="#n-fin"/></svg><span class="nav-txt">Without Finishes</span><span class="tri-r"></span></div>
        <div class="nav-cell d-flex align-items-center"><svg class="ic ic-s"><use href="#n-pen"/></svg><span class="nav-txt">CBA - Office Printi...</span><span class="tri-r"></span></div>
        <div class="nav-cell d-flex align-items-center"><svg class="ic ic-s"><use href="#n-plan"/></svg><span class="nav-txt">SBA - Planning Dr...</span><span class="tri-r"></span></div>
        <div class="nav-cell d-flex align-items-center"><svg class="ic ic-s"><use href="#n-copy"/></svg><span class="nav-txt">SBA - Planning Dr...</span><span class="tri-r"></span></div>
        <div class="nav-cell d-flex align-items-center"><svg class="ic ic-s"><use href="#n-stat"/></svg><span class="nav-txt">05 Planned Status</span><span class="tri-r"></span></div>
        <div class="nav-cell d-flex align-items-center"><svg class="ic ic-s"><use href="#n-model"/></svg><span class="nav-txt">Main Model Only</span><span class="tri-r"></span></div>
        <div class="nav-cell d-flex align-items-center flex-fill"><svg class="ic ic-s"><use href="#n-pref"/></svg><span class="nav-txt">SBA - Preferences</span><span class="tri-r"></span></div>
      </div>
    </div>

    <aside class="side-panel d-flex flex-column">
      <div class="grip-h w-auto mx-5 mb-1 mt-1"></div>
      <div class="pan-tabs d-flex align-items-center">
        <div class="pan-on d-flex align-items-center justify-content-center"><svg class="ic"><use href="#k-proj"/></svg></div>
        <div class="pan-sep"></div>
        <div class="tb-slot d-flex align-items-center justify-content-center ms-1"><svg class="ic"><use href="#k-lay2"/></svg></div>
        <div class="tb-slot d-flex align-items-center justify-content-center ms-1"><svg class="ic"><use href="#k-fold"/></svg></div>
        <div class="tb-slot d-flex align-items-center justify-content-center ms-1"><svg class="ic"><use href="#k-pub"/></svg></div>
        <div class="pan-btn d-flex align-items-center justify-content-center"><svg class="ic ic-s"><path d="M2 4h12M2 8h12M2 12h12"/></svg><span class="tri-r"></span></div>
      </div>
      <div class="search-box d-flex align-items-center">
        <svg class="ic ic-s search-ic"><circle cx="7" cy="7" r="5"/><path d="M10.500 11l4 4"/></svg>
        <span>Search Project Map</span>
      </div>
      <div class="tree-wrap d-flex">
        <div class="tree-list list-group list-group-flush rounded-0">
          <div class="list-group-item tree-row d-flex align-items-center lv0"><svg class="chev" height="6" viewBox="0 0 10 6" fill="none" stroke="#333" stroke-width="1.500"><path d="M1 1l4 4 4-4"/></svg><svg class="ic"><use href="#k-proj"/></svg>20-247-Archicad1</div>
          <div class="list-group-item tree-row d-flex align-items-center lv1"><svg class="chev" height="6" viewBox="0 0 10 6" fill="none" stroke="#333" stroke-width="1.500"><path d="M1 1l4 4 4-4"/></svg><svg class="ic"><use href="#k-storyf"/></svg>Stories</div>
          <div class="list-group-item tree-row d-flex align-items-center lv2"><svg class="ic"><use href="#k-story"/></svg>5. Building Details F</div>
          <div class="list-group-item tree-row d-flex align-items-center lv2"><svg class="ic"><use href="#k-story"/></svg>4. Building Details G</div>
          <div class="list-group-item tree-row d-flex align-items-center lv2"><svg class="ic"><use href="#k-story"/></svg>3. Roof Layout</div>
          <div class="list-group-item tree-row d-flex align-items-center lv2"><svg class="ic"><use href="#k-story"/></svg>2. Second Floor Lev</div>
          <div class="list-group-item tree-row d-flex align-items-center lv2"><svg class="ic"><use href="#k-story"/></svg>1. First Floor Level</div>
          <div class="list-group-item tree-row is-sel d-flex align-items-center lv2"><svg class="ic"><use href="#k-story"/></svg>0. Ground Floor Lev</div>
          <div class="list-group-item tree-row d-flex align-items-center lv2"><svg class="ic"><use href="#k-story"/></svg>-1. Lower Ground F</div>
          <div class="list-group-item tree-row d-flex align-items-center lv1"><svg class="chev" height="6" viewBox="0 0 10 6" fill="none" stroke="#333" stroke-width="1.500"><path d="M1 1l4 4 4-4"/></svg><svg class="ic"><use href="#k-secf"/></svg>Sections</div>
          <div class="list-group-item tree-row d-flex align-items-center lv2"><svg class="ic"><use href="#k-sec"/></svg>A-A Cross Section B</div>
          <div class="list-group-item tree-row d-flex align-items-center lv2"><svg class="ic"><use href="#k-sec"/></svg>B-B Garage Cross Se</div>
          <div class="list-group-item tree-row d-flex align-items-center lv2"><svg class="ic"><use href="#k-sec"/></svg>C-C Cross Section C</div>
          <div class="list-group-item tree-row d-flex align-items-center lv2"><svg class="ic"><use href="#k-sec"/></svg>C-C Proposed Sectio</div>
          <div class="list-group-item tree-row d-flex align-items-center lv2"><svg class="ic"><use href="#k-sec"/></svg>D-D Cross Section E</div>
          <div class="list-group-item tree-row d-flex align-items-center lv2"><svg class="ic"><use href="#k-sec"/></svg>D-D Cross Section D</div>
          <div class="list-group-item tree-row d-flex align-items-center lv2"><svg class="ic"><use href="#k-sec"/></svg>X-X Site Section X-X</div>
          <div class="list-group-item tree-row d-flex align-items-center lv1"><svg class="chev" height="6" viewBox="0 0 10 6" fill="none" stroke="#333" stroke-width="1.500"><path d="M1 1l4 4 4-4"/></svg><svg class="ic"><use href="#k-elevf"/></svg>Elevations</div>
          <div class="list-group-item tree-row d-flex align-items-center lv2"><svg class="ic"><use href="#k-elev"/></svg>Garage Front (Auto</div>
          <div class="list-group-item tree-row d-flex align-items-center lv2"><svg class="ic"><use href="#k-elev"/></svg>Garage Rear (Auto-r</div>
          <div class="list-group-item tree-row d-flex align-items-center lv2"><svg class="ic"><use href="#k-elev"/></svg>Garage Side 1 (Auto</div>
          <div class="list-group-item tree-row d-flex align-items-center lv2"><svg class="ic"><use href="#k-elev"/></svg>Garage Side 2 (Auto</div>
          <div class="list-group-item tree-row d-flex align-items-center lv2"><svg class="ic"><use href="#k-elev"/></svg>House East (Auto-re</div>
          <div class="list-group-item tree-row d-flex align-items-center lv2"><svg class="ic"><use href="#k-elev"/></svg>House Front (South</div>
          <div class="list-group-item tree-row d-flex align-items-center lv2"><svg class="ic"><use href="#k-elev"/></svg>House Rear North (A</div>
          <div class="list-group-item tree-row d-flex align-items-center lv2"><svg class="ic"><use href="#k-elev"/></svg>House Side 3 (Auto</div>
          <div class="list-group-item tree-row d-flex align-items-center lv2"><svg class="ic"><use href="#k-elev"/></svg>House West (Auto-r</div>
          <div class="list-group-item tree-row d-flex align-items-center lv2"><svg class="ic"><use href="#k-elev"/></svg>Site Contiguous Ele</div>
          <div class="list-group-item tree-row d-flex align-items-center lv1b"><svg class="ic"><use href="#k-ie"/></svg>Interior Elevations</div>
          <div class="list-group-item tree-row d-flex align-items-center lv1"><svg class="chev" height="6" viewBox="0 0 10 6" fill="none" stroke="#333" stroke-width="1.500"><path d="M1 1l4 4 4-4"/></svg><svg class="ic"><use href="#k-work"/></svg>Worksheets</div>
          <div class="list-group-item tree-row d-flex align-items-center lv2"><svg class="ic"><use href="#k-work"/></svg>01 Survey Trace (Ind</div>
        </div>
        <div class="v-scroll d-flex flex-column align-items-center">
          <svg class="mt-2" width="10" height="6" viewBox="0 0 10 6" fill="none" stroke="#555" stroke-width="1.500"><path d="M1 5l4-4 4 4"/></svg>
          <div class="v-thumb w-100"></div>
          <svg width="10" height="6" viewBox="0 0 10 6" fill="none" stroke="#555" stroke-width="1.500"><path d="M1 1l4 4 4-4"/></svg>
        </div>
      </div>
      <div class="h-scroll d-flex align-items-center">
        <svg class="ms-2" width="6" height="10" viewBox="0 0 6 10" fill="none" stroke="#555" stroke-width="1.500"><path d="M5 1L1 5l4 4"/></svg>
        <div class="h-thumb ms-1"></div>
        <svg class="me-2" width="6" height="10" viewBox="0 0 6 10" fill="none" stroke="#555" stroke-width="1.500"><path d="M1 1l4 4-4 4"/></svg>
      </div>
      <div class="act-row d-flex align-items-center">
        <svg class="ic ic-s"><use href="#k-plus"/></svg>
        <svg class="ic ic-s"><use href="#k-list"/></svg>
        <svg class="ic ic-s"><use href="#k-x"/></svg>
      </div>
      <div class="prop-head d-flex align-items-center"><span class="tri-d"></span><span>Properties</span></div>
      <div class="prop-row d-flex align-items-center">
        <svg class="ic ic-s me-1"><use href="#k-story"/></svg><span>0.</span>
        <input class="form-control prop-input" type="text" value="Ground Floor Level" />
      </div>
      <button type="button" class="btn set-btn">Settings...</button>
    </aside>
  </div>

  <div class="status-bar d-flex align-items-center">
    <span>Toggles the clean wall and beam intersection mode on and off.</span>
    <div class="id-box d-flex align-items-center">
      <svg class="ic ic-s me-1"><use href="#k-win"/></svg>
      <div class="id-div"></div>
      <span class="id-txt">GRAPHISOFT ID</span>
      <div class="id-div"></div>
    </div>
  </div>

  <!-- View menu -->
  <div class="dropdown-menu show fly fly-a">
    <div class="dropdown-item m-it is-hi d-flex align-items-center"><span class="m-ico"></span>On-Screen View Options<span class="tri-r m-arr"></span></div>
    <div class="dropdown-divider m-sep first-sep"></div>
    <div class="dropdown-item m-it d-flex align-items-center"><span class="m-ico"><svg class="ic"><use href="#trace"/></svg></span>Trace<span class="m-key">Alt+F2</span></div>
    <div class="dropdown-item m-it d-flex align-items-center"><span class="m-ico"><svg class="ic"><use href="#cgrid"/></svg></span><span>Construction Grid <u>D</u>isplay</span></div>
    <div class="dropdown-item m-it d-flex align-items-center"><span class="m-ico is-on"><svg class="ic"><use href="#eplane"/></svg></span>Editing Plane Display</div>
    <div class="dropdown-item m-it d-flex align-items-center"><span class="m-ico"></span>Trace Options<span class="tri-r m-arr"></span></div>
    <div class="dropdown-item m-it d-flex align-items-center"><span class="m-ico"></span>Grid &amp; Editing Plane Options<span class="tri-r m-arr"></span></div>
    <div class="dropdown-divider m-sep"></div>
    <div class="dropdown-item m-it d-flex align-items-center"><span class="m-ico"><svg class="ic"><use href="#ruler"/></svg></span>Ruler</div>
    <div class="dropdown-item m-it d-flex align-items-center"><span class="m-ico is-on"><svg class="ic"><use href="#guide"/></svg></span>Guide Lines<span class="m-key">L</span></div>
    <div class="dropdown-item m-it d-flex align-items-center"><span class="m-ico"></span>Guide Line Options<span class="tri-r m-arr"></span></div>
    <div class="dropdown-divider m-sep"></div>
    <div class="dropdown-item m-it d-flex align-items-center"><span class="m-ico is-on"><svg class="ic"><use href="#esnap"/></svg></span><span><u>E</u>lement Snap</span><span class="m-key">Alt+E</span></div>
    <div class="dropdown-item m-it d-flex align-items-center"><span class="m-ico is-on"><svg class="ic"><use href="#ssnap"/></svg></span><span><u>S</u>urface Snap</span></div>
    <div class="dropdown-item m-it d-flex align-items-center"><span class="m-ico is-on"><svg class="ic"><use href="#sguides"/></svg></span>Snap Guides</div>
    <div class="dropdown-item m-it d-flex align-items-center"><span class="m-ico is-on"><svg class="ic"><use href="#spoints"/></svg></span>Snap Points</div>
    <div class="dropdown-item m-it d-flex align-items-center"><span class="m-ico"></span>Snap Point Options<span class="tri-r m-arr"></span></div>
    <div class="dropdown-item m-it d-flex align-items-center"><span class="m-ico"><svg class="ic"><use href="#gsnap"/></svg></span><span><u>G</u>rid Snap</span><span class="m-key">Alt+S</span></div>
    <div class="dropdown-item m-it d-flex align-items-center"><span class="m-ico"></span>Grid Snap Options<span class="tri-r m-arr"></span></div>
    <div class="dropdown-divider m-sep"></div>
    <div class="dropdown-item m-it d-flex align-items-center"><span class="m-ico"></span>Elements in 3D View<span class="tri-r m-arr"></span></div>
    <div class="dropdown-item m-it d-flex align-items-center"><span class="m-ico"></span>3D View Options<span class="tri-r m-arr"></span></div>
    <div class="dropdown-divider m-sep"></div>
    <div class="dropdown-item m-it d-flex align-items-center"><span class="m-ico"><svg class="ic"><use href="#sam"/></svg></span>Structural Analytical Model</div>
    <div class="dropdown-item m-it d-flex align-items-center"><span class="m-ico"></span>Structural Analytical Model Options<span class="tri-r m-arr"></span></div>
    <div class="dropdown-divider m-sep"></div>
    <div class="dropdown-item m-it d-flex align-items-center"><span class="m-ico"></span>Zoom<span class="tri-r m-arr"></span></div>
    <div class="dropdown-item m-it is-dis d-flex align-items-center"><span class="m-ico"><svg class="ic"><use href="#orbit"/></svg></span>Orbit<span class="m-key">O</span></div>
    <div class="dropdown-item m-it is-dis d-flex align-items-center"><span class="m-ico"><svg class="ic"><use href="#explore"/></svg></span>Explore Model</div>
    <div class="dropdown-item m-it d-flex align-items-center"><span class="m-ico"></span>3D Navigation Extras<span class="tri-r m-arr"></span></div>
    <div class="dropdown-divider m-sep"></div>
    <div class="dropdown-item m-it d-flex align-items-center"><span class="m-ico"></span>Refresh<span class="tri-r m-arr"></span></div>
  </div>

  <!-- On-Screen View Options submenu -->
  <div class="dropdown-menu show fly fly-b">
    <div class="dropdown-item m-it is-hi first-gap d-flex align-items-center"><span class="m-ico"><svg class="ic"><use href="#cleanw"/></svg></span><span>Clean Wall &amp; Beam <u>I</u>ntersections</span></div>
    <div class="dropdown-item m-it d-flex align-items-center"><span class="m-ico is-on"><svg class="ic"><use href="#wbref"/></svg></span>Wall &amp; Beam Reference Lines</div>
    <div class="dropdown-item m-it d-flex align-items-center"><span class="m-ico"><svg class="ic"><use href="#roofp"/></svg></span>Roof Pivot Lines</div>
    <div class="dropdown-item m-it d-flex align-items-center"><span class="m-ico"><svg class="ic"><use href="#stairb"/></svg></span>Stair Baselines</div>
    <div class="dropdown-item m-it d-flex align-items-center"><span class="m-ico"><svg class="ic"><use href="#stairw"/></svg></span>Stair Calculated Walking Lines</div>
    <div class="dropdown-item m-it d-flex align-items-center"><span class="m-ico"><svg class="ic"><use href="#stairl"/></svg></span>Stair Landing Calculation Guidelines</div>
    <div class="dropdown-item m-it d-flex align-items-center"><span class="m-ico"><svg class="ic"><use href="#railr"/></svg></span>Railing Reference Lines</div>
    <div class="dropdown-item m-it d-flex align-items-center"><span class="m-ico"><svg class="ic"><use href="#openr"/></svg></span>Opening Reference Planes</div>
    <div class="dropdown-item m-it d-flex align-items-center"><span class="m-ico is-on"><svg class="ic"><use href="#trueln"/></svg></span>True Line Weight</div>
    <div class="dropdown-item m-it is-dis d-flex align-items-center"><span class="m-ico"><svg class="ic"><use href="#boldc"/></svg></span>Bold Cut Lines</div>
    <div class="dropdown-item m-it d-flex align-items-center"><span class="m-ico is-on"><svg class="ic"><use href="#truefl"/></svg></span>True Fill Appearance</div>
    <div class="dropdown-item m-it d-flex align-items-center"><span class="m-ico is-on"><svg class="ic"><use href="#marker"/></svg></span>Marker Range</div>
    <div class="dropdown-item m-it d-flex align-items-center"><span class="m-ico"><svg class="ic"><use href="#sourcem"/></svg></span>Highlight Source Markers</div>
    <div class="dropdown-item m-it d-flex align-items-center"><span class="m-ico is-on"><svg class="ic"><use href="#frames"/></svg></span>Drawing Frames</div>
    <div class="dropdown-item m-it d-flex align-items-center"><span class="m-ico is-on"><svg class="ic"><use href="#master"/></svg></span>Master Items on Layout</div>
    <div class="dropdown-item m-it d-flex align-items-center"><span class="m-ico is-on"><svg class="ic"><use href="#dimr"/><text x="10" y="9" text-anchor="middle" font-size="8" font-weight="700" class="ic-txt">1.2</text></svg></span>Dimension Reference Lines</div>
    <div class="dropdown-divider m-sep"></div>
    <div class="dropdown-item m-it d-flex align-items-center"><span class="m-ico"><svg class="ic"><use href="#aids"/></svg></span>Show Drafting &amp; Editing Aids</div>
    <div class="dropdown-item m-it d-flex align-items-center"><span class="m-ico"><svg class="ic"><use href="#fillh"/></svg></span>Fill Handles</div>
    <div class="dropdown-item m-it d-flex align-items-center"><span class="m-ico"><svg class="ic"><use href="#textb"/><text x="10" y="13.500" text-anchor="middle" font-size="9" class="ic-txt">Abc</text></svg></span>Textbox Handles</div>
    <div class="dropdown-item m-it d-flex align-items-center"><span class="m-ico"><svg class="ic"><use href="#figure"/></svg></span>Figure Handles</div>
    <div class="dropdown-item m-it d-flex align-items-center"><span class="m-ico"><svg class="ic"><use href="#spline"/></svg></span>Spline Handles</div>
    <div class="dropdown-divider m-sep"></div>
    <div class="dropdown-item m-it d-flex align-items-center"><span class="m-ico"><svg class="ic"><use href="#trim"/></svg></span>Trimming Bodies</div>
    <div class="dropdown-item m-it d-flex align-items-center"><span class="m-ico"><svg class="ic"><use href="#openc"/></svg></span>Opening Cutting Bodies</div>
    <div class="dropdown-divider m-sep"></div>
    <div class="dropdown-item m-it d-flex align-items-center"><span class="m-ico"><svg class="ic"><use href="#morph"/></svg></span>Hidden Morph Geometry</div>
  </div>

</div>

<script src="https://cdn.jsdelivr.net/npm/bootstrap@5.3.0/dist/js/bootstrap.bundle.min.js"></script>
</body>
</html>
